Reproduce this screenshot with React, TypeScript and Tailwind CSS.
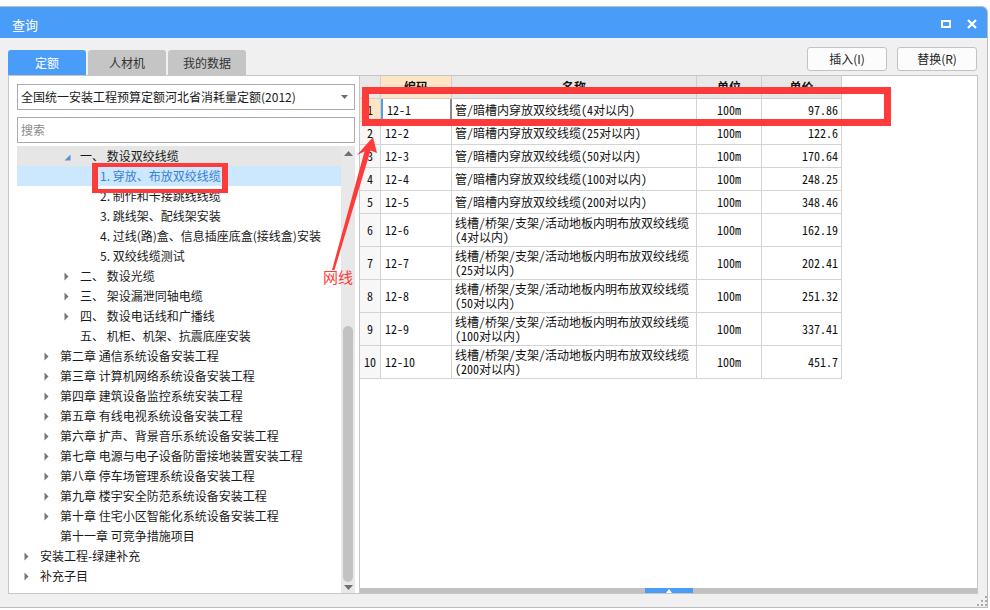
import React from 'react';

type TreeRow = { lvl: number; arrow?: 'open' | 'closed'; text: string; hover?: boolean; selected?: boolean };

const tree: TreeRow[] = [
  { lvl: 2, arrow: 'open', text: '一、 数设双绞线缆', hover: true },
  { lvl: 3, text: '1. 穿放、布放双绞线缆', selected: true },
  { lvl: 3, text: '2. 制作和卡接跳线线缆' },
  { lvl: 3, text: '3. 跳线架、配线架安装' },
  { lvl: 3, text: '4. 过线(路)盒、信息插座底盒(接线盒)安装' },
  { lvl: 3, text: '5. 双绞线缆测试' },
  { lvl: 2, arrow: 'closed', text: '二、 数设光缆' },
  { lvl: 2, arrow: 'closed', text: '三、 架设漏泄同轴电缆' },
  { lvl: 2, arrow: 'closed', text: '四、 数设电话线和广播线' },
  { lvl: 2, text: '五、 机柜、机架、抗震底座安装' },
  { lvl: 1, arrow: 'closed', text: '第二章 通信系统设备安装工程' },
  { lvl: 1, arrow: 'closed', text: '第三章 计算机网络系统设备安装工程' },
  { lvl: 1, arrow: 'closed', text: '第四章 建筑设备监控系统安装工程' },
  { lvl: 1, arrow: 'closed', text: '第五章 有线电视系统设备安装工程' },
  { lvl: 1, arrow: 'closed', text: '第六章 扩声、背景音乐系统设备安装工程' },
  { lvl: 1, arrow: 'closed', text: '第七章 电源与电子设备防雷接地装置安装工程' },
  { lvl: 1, arrow: 'closed', text: '第八章 停车场管理系统设备安装工程' },
  { lvl: 1, arrow: 'closed', text: '第九章 楼宇安全防范系统设备安装工程' },
  { lvl: 1, arrow: 'closed', text: '第十章 住宅小区智能化系统设备安装工程' },
  { lvl: 1, text: '第十一章 可竞争措施项目' },
  { lvl: 0, arrow: 'closed', text: '安装工程-绿建补充' },
  { lvl: 0, arrow: 'closed', text: '补充子目' },
];

const spacers = ['w-[7px]', 'w-[27px]', 'w-[47px]', 'w-[67px]'];

type Row = { n: number; code: string; name: string[]; unit: string; price: string };
const rows: Row[] = [
  { n: 1, code: '12-1', name: ['管/暗槽内穿放双绞线缆(4对以内)'], unit: '100m', price: '97.86' },
  { n: 2, code: '12-2', name: ['管/暗槽内穿放双绞线缆(25对以内)'], unit: '100m', price: '122.6' },
  { n: 3, code: '12-3', name: ['管/暗槽内穿放双绞线缆(50对以内)'], unit: '100m', price: '170.64' },
  { n: 4, code: '12-4', name: ['管/暗槽内穿放双绞线缆(100对以内)'], unit: '100m', price: '248.25' },
  { n: 5, code: '12-5', name: ['管/暗槽内穿放双绞线缆(200对以内)'], unit: '100m', price: '348.46' },
  { n: 6, code: '12-6', name: ['线槽/桥架/支架/活动地板内明布放双绞线缆', '(4对以内)'], unit: '100m', price: '162.19' },
  { n: 7, code: '12-7', name: ['线槽/桥架/支架/活动地板内明布放双绞线缆', '(25对以内)'], unit: '100m', price: '202.41' },
  { n: 8, code: '12-8', name: ['线槽/桥架/支架/活动地板内明布放双绞线缆', '(50对以内)'], unit: '100m', price: '251.32' },
  { n: 9, code: '12-9', name: ['线槽/桥架/支架/活动地板内明布放双绞线缆', '(100对以内)'], unit: '100m', price: '337.41' },
  { n: 10, code: '12-10', name: ['线槽/桥架/支架/活动地板内明布放双绞线缆', '(200对以内)'], unit: '100m', price: '451.7' },
];

function TreeArrow({ type }: { type?: 'open' | 'closed' }) {
  if (type === 'open')
    return (
      <svg width="7" height="7" viewBox="0 0 7 7" className="mt-[3px]">
        <polygon points="6.5,0.5 6.5,6.5 0.5,6.5" fill="#5a8fd2" />
      </svg>
    );
  if (type === 'closed')
    return (
      <svg width="5" height="9" viewBox="0 0 5 9">
        <polygon points="0.5,0.5 4.5,4.5 0.5,8.5" fill="#777" />
      </svg>
    );
  return null;
}

function Tab({ label, active }: { label: string; active?: boolean }) {
  return (
    <div
      className={
        active
          ? 'w-[78px] h-[25px] rounded-t-[3px] bg-[#4a9cf9] text-white flex items-center justify-center'
          : 'w-[78px] h-[25px] rounded-t-[3px] bg-[#c5c5c5] text-[#333] flex items-center justify-center'
      }
    >
      {label}
    </div>
  );
}

const mono = "font-['Noto_Sans_Mono_CJK_SC','Liberation_Mono','Noto_Sans_CJK_SC',monospace]";

export default function App() {
  return (
    <div className="relative w-[990px] h-[610px] bg-white overflow-hidden font-['Noto_Sans_CJK_SC',sans-serif] text-[12px] text-[#1a1a1a]">
      <div className="mt-[6px] w-[988px] h-[602px] border border-l-0 border-[#bdbdbd] rounded-tr-[6px] bg-[#f0f0f0] flex flex-col overflow-hidden">
        {/* Title bar */}
        <div className="h-[31px] shrink-0 bg-[#4a9cf9] flex items-center pl-[12px] pr-[10px] text-white">
          <span className="text-[13px] leading-none pt-[3px]">查询</span>
          <div className="ml-auto flex items-center gap-[16px] pt-[2px]">
            <div className="w-[10px] h-[8px] border-2 border-white" />
            <svg width="10" height="10" viewBox="0 0 10 10">
              <path d="M1 1 L9 9 M9 1 L1 9" stroke="white" strokeWidth="2.2" />
            </svg>
          </div>
        </div>

        <div className="flex pt-[8px] pl-[8px] pr-[9px]">
          {/* Left column */}
          <div className="w-[351px] flex flex-col">
            <div className="h-[29px] flex items-end gap-[2px]">
              <Tab label="定额" active />
              <Tab label="人材机" />
              <Tab label="我的数据" />
            </div>
            <div className="h-[519px] border border-r-0 border-[#c6c6c6] bg-white pt-[8px] pl-[8px] pr-[4px] flex flex-col">
              <div className="h-[26px] shrink-0 border border-[#ababab] flex items-center pl-[3px] pr-[6px]">
                <span>全国统一安装工程预算定额河北省消耗量定额(2012)</span>
                <svg width="7" height="4" viewBox="0 0 7 4" className="ml-auto">
                  <polygon points="0,0 7,0 3.5,4" fill="#6f6f6f" />
                </svg>
              </div>
              <div className="h-[26px] shrink-0 mt-[7px] border border-[#ababab] flex items-center pl-[3px] text-[#8a8a8a]">
                搜索
              </div>
              <div className="mt-[3px] flex-1 flex min-h-0">
                <div className="flex-1 flex flex-col">
                  {tree.map((r, i) => (
                    <div
                      key={i}
                      className={
                        'h-[20px] flex items-center whitespace-pre ' +
                        (r.selected ? 'bg-[#cce8ff] text-[#3a7ed6]' : r.hover ? 'bg-[#e6e6e6]' : '')
                      }
                    >
                      <div className={spacers[r.lvl] + ' shrink-0'} />
                      <div className="w-[16px] shrink-0 flex items-center">
                        <TreeArrow type={r.arrow} />
                      </div>
                      <span>{r.text}</span>
                    </div>
                  ))}
                </div>
                <div className="w-[14px] bg-[#e8e8e8] flex flex-col items-center">
                  <div className="h-[12px] flex items-center pt-[2px]">
                    <svg width="9" height="5" viewBox="0 0 9 5">
                      <polygon points="0,5 9,5 4.5,0" fill="#707070" />
                    </svg>
                  </div>
                  <div className="flex-1" />
                  <div className="w-[10px] h-[256px] rounded-full bg-[#c2c2c2]" />
                  <div className="h-[11px] flex items-center">
                    <svg width="9" height="5" viewBox="0 0 9 5">
                      <polygon points="0,0 9,0 4.5,5" fill="#707070" />
                    </svg>
                  </div>
                </div>
              </div>
            </div>
          </div>

          {/* Right column */}
          <div className="w-[619px] flex flex-col">
            <div className="h-[29px] flex justify-end items-start pt-[1px] gap-[10px] pr-[1px]">
              <div className="w-[80px] h-[24px] border border-[#c3c3c3] rounded-[3px] bg-[#fcfcfc] flex items-center justify-center text-[#222]">
                插入(I)
              </div>
              <div className="w-[80px] h-[24px] border border-[#c3c3c3] rounded-[3px] bg-[#fcfcfc] flex items-center justify-center text-[#222]">
                替换(R)
              </div>
            </div>
            <div className="h-[519px] border border-[#c6c6c6] bg-white flex flex-col">
              <div className={'flex-1 flex flex-col text-[#111] ' + mono}>
                {/* header */}
                <div className="flex h-[23px] font-bold font-['Noto_Sans_CJK_SC',sans-serif]">
                  <div className="w-[21px] border-r border-b border-[#cfcfcf] bg-[#e8e8e8]" />
                  <div className="w-[71px] border-r border-b border-[#cfcfcf] bg-[#fde5c5] flex items-center justify-center">编码</div>
                  <div className="w-[245px] border-r border-b border-[#cfcfcf] bg-[#e8e8e8] flex items-center justify-center">名称</div>
                  <div className="w-[65px] border-r border-b border-[#cfcfcf] bg-[#e8e8e8] flex items-center justify-center">单位</div>
                  <div className="w-[80px] border-r border-b border-[#cfcfcf] bg-[#e8e8e8] flex items-center justify-center">单价</div>
                </div>
                {rows.map((r) => {
                  const h = r.name.length > 1 ? 'h-[33px]' : 'h-[23px]';
                  const first = r.n === 1;
                  return (
                    <div key={r.n} className={'flex ' + h}>
                      <div
                        className={
                          'w-[21px] border-r border-b border-[#d4d4d4] flex items-center justify-center ' +
                          (first ? 'bg-[#fde5c5]' : 'bg-[#f7f7f7]')
                        }
                      >
                        {r.n}
                      </div>
                      <div
                        className={
                          'w-[71px] border-b flex items-center pl-[4px] ' +
                          (first ? 'border-l-2 border-l-[#5b9be3] border-r-2 border-r-[#8a8a8a] border-b-[#d4d4d4] pl-[2px]' : 'border-r border-[#d4d4d4]')
                        }
                      >
                        {r.code}
                      </div>
                      <div className="w-[245px] border-r border-b border-[#d4d4d4] flex flex-col justify-center pl-[3px] leading-[14px]">
                        {r.name.map((t, i) => (
                          <div key={i} className="whitespace-nowrap">{t}</div>
                        ))}
                      </div>
                      <div className="w-[65px] border-r border-b border-[#d4d4d4] flex items-center justify-center">{r.unit}</div>
                      <div className="w-[80px] border-r border-b border-[#d4d4d4] flex items-center justify-end pr-[3px]">{r.price}</div>
                    </div>
                  );
                })}
              </div>
              <div className="h-[5px] bg-[#c0c0c0] flex justify-center">
                <div className="w-[48px] h-[5px] bg-[#4a9cf9] flex items-center justify-center">
                  <svg width="6" height="4" viewBox="0 0 6 4">
                    <polygon points="0,4 6,4 3,0" fill="#fff" />
                  </svg>
                </div>
              </div>
            </div>
          </div>
        </div>
      </div>

      {/* resize grip */}
      <svg className="absolute left-[977px] top-[596px]" width="10" height="10" viewBox="0 0 10 10">
        <rect x="8" y="0" width="2" height="2" fill="#aaa" />
        <rect x="8" y="4" width="2" height="2" fill="#aaa" />
        <rect x="4" y="4" width="2" height="2" fill="#aaa" />
        <rect x="8" y="8" width="2" height="2" fill="#aaa" />
        <rect x="4" y="8" width="2" height="2" fill="#aaa" />
        <rect x="0" y="8" width="2" height="2" fill="#aaa" />
      </svg>

      {/* annotations */}
      <div className="absolute left-[362px] top-[87px] w-[529px] h-[39px] border-[7px] border-[#fd3b3b]" />
      <div className="absolute left-[92px] top-[163px] w-[136px] h-[30px] border-x-[6px] border-y-[4px] border-[#fd3b3b]" />
      <svg className="absolute left-0 top-0 pointer-events-none" width="990" height="610" viewBox="0 0 990 610">
        <polygon
          points="373,137 377,153 370.5,150.5 334.5,270 332,270 364.5,151.5 357,155"
          fill="#fd3b3b"
        />
      </svg>
      <div className="absolute left-[323px] top-[267px] text-[15px] leading-[20px] text-[#fd3b3b]">网线</div>
    </div>
  );
}
